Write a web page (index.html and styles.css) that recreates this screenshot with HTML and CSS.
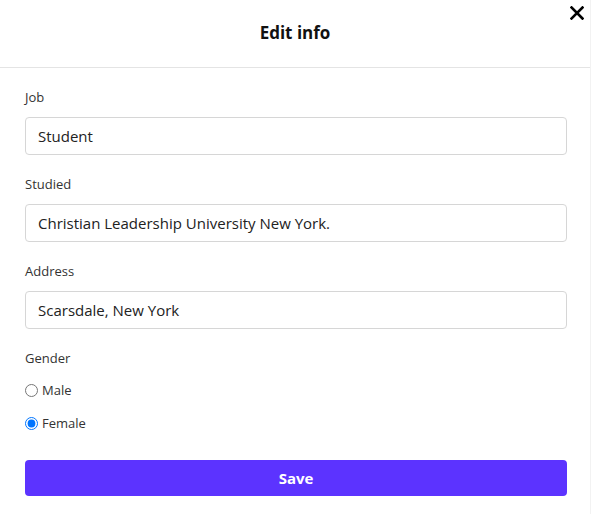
FILE: index.html
```html
<!DOCTYPE html>
<html>
<head>
<meta charset="utf-8">
<link rel="stylesheet" href="styles.css">
</head>
<body>
<div class="modal">
  <header class="modal-header">
    <h1 class="modal-title">Edit info</h1>
    <button class="close-btn" aria-label="Close">
      <svg width="14" height="14" viewBox="0 0 14 14"><path d="M1.5 1.5 L12.5 12.5 M12.5 1.5 L1.5 12.5" stroke="#000" stroke-width="2.6" stroke-linecap="square"/></svg>
    </button>
  </header>
  <form class="modal-body">
    <div class="field">
      <label class="field-label">Job</label>
      <input class="field-input" type="text" value="Student">
    </div>
    <div class="field">
      <label class="field-label">Studied</label>
      <input class="field-input" type="text" value="Christian Leadership University New York.">
    </div>
    <div class="field">
      <label class="field-label">Address</label>
      <input class="field-input" type="text" value="Scarsdale, New York">
    </div>
    <div class="field gender">
      <div class="field-label">Gender</div>
      <label class="radio"><input type="radio" name="g"> Male</label>
      <label class="radio"><input type="radio" name="g" checked> Female</label>
    </div>
    <button type="button" class="save-btn">Save</button>
  </form>
</div>
</body>
</html>
```
FILE: styles.css
```css
* { box-sizing: border-box; }
html, body { margin: 0; padding: 0; background: #fff; }
body { font-family: "Open Sans", "Noto Sans", Arial, sans-serif; color: #222; }
.modal { width: 591px; height: 514px; position: relative; background: #fff; border-right: 1px solid #f2f2f2; }
.modal-header { height: 68px; border-bottom: 1px solid #e4e4e4; display: flex; align-items: center; justify-content: center; }
.modal-title { margin: 0; font-size: 17px; font-weight: 700; color: #111; line-height: 24px; padding-bottom: 2px; }
.close-btn { position: absolute; top: 6px; right: 6px; width: 14px; height: 14px; padding: 0; border: 0; background: none; display: flex; }
.modal-body { padding: 19px 23px 0 25px; display: flex; flex-direction: column; }
.field { display: flex; flex-direction: column; margin-bottom: 19px; }
.field-label { font-size: 13px; line-height: 20px; color: #333; margin-bottom: 10px; }
.field-input { height: 38px; border: 1px solid #d6d6d6; border-radius: 4px; padding: 0 12px; font: inherit; font-size: 15px; color: #222; outline: none; }
.gender .field-label { margin-bottom: 12px; }
.radio { display: flex; align-items: center; font-size: 13px; line-height: 20px; color: #333; margin-bottom: 13px; }
.radio:last-child { margin-bottom: 0; }
.radio input { margin: 0 4px 0 0; width: 13px; height: 13px; }
.gender { margin-bottom: 27px; }
.save-btn { height: 36px; border: 0; border-radius: 4px; background: #5c33ff; color: #fff; font: inherit; font-weight: 700; font-size: 15px; }
```
